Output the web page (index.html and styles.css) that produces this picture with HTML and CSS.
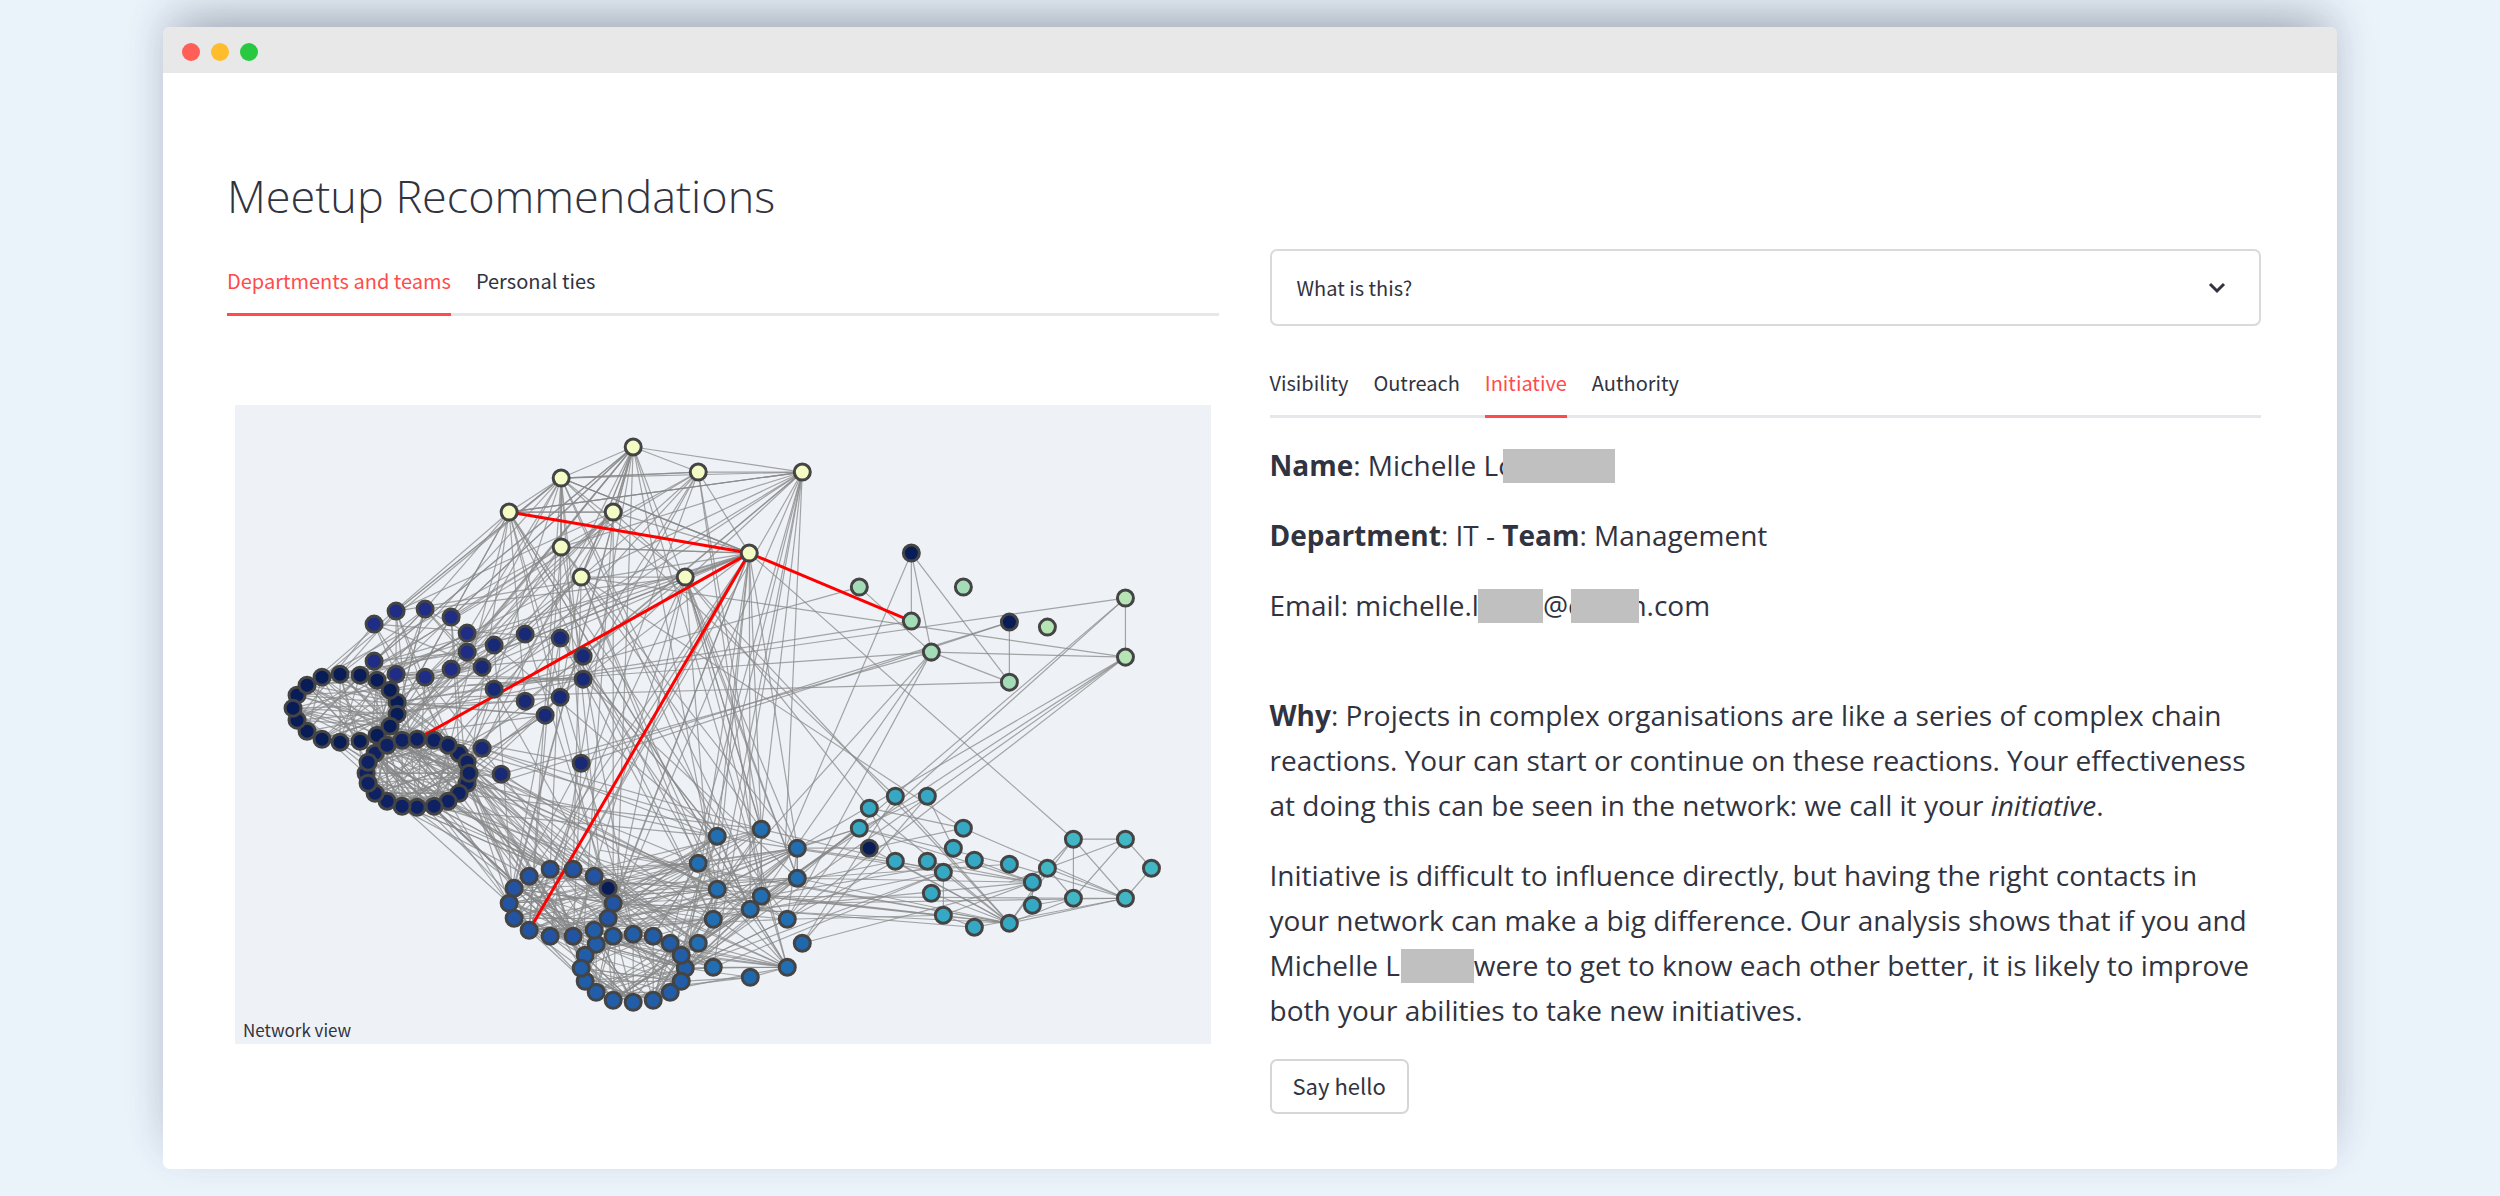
FILE: index.html
```html
<!DOCTYPE html>
<html lang="en">
<head>
<meta charset="utf-8">
<meta name="viewport" content="width=device-width, initial-scale=1">
<title>Meetup Recommendations</title>
<link rel="stylesheet" href="styles.css">
</head>
<body>
<div class="window">
  <div class="titlebar">
    <span class="dot dot-close"></span>
    <span class="dot dot-min"></span>
    <span class="dot dot-max"></span>
  </div>
  <main class="content">
    <h1 class="title">Meetup Recommendations</h1>
    <div class="columns">
      <section class="column">
        <div class="tabs" role="tablist">
          <button class="tab tab-active" role="tab" aria-selected="true">Departments and teams</button>
          <button class="tab" role="tab" aria-selected="false">Personal ties</button>
        </div>
        <figure class="network">
          <svg id="graph" class="graph" viewBox="235 405 975 639" role="img" aria-label="Network view"></svg>
          <figcaption class="network-label">Network view</figcaption>
        </figure>
      </section>
      <section class="column">
        <details class="expander">
          <summary class="expander-head">What is this?
            <svg class="chevron" viewBox="0 0 18 12"><path d="M2 2l7 7 7-7"/></svg>
          </summary>
        </details>
        <div class="tabs tabs-measures" role="tablist">
          <button class="tab" role="tab" aria-selected="false">Visibility</button>
          <button class="tab" role="tab" aria-selected="false">Outreach</button>
          <button class="tab tab-active" role="tab" aria-selected="true">Initiative</button>
          <button class="tab" role="tab" aria-selected="false">Authority</button>
        </div>
        <div class="person">
          <p><strong>Name</strong>: Michelle Lo<span class="redacted redacted-name"></span></p>
          <p><strong>Department</strong>: IT - <strong>Team</strong>: Management</p>
          <p>Email: michelle.l<span class="redacted redacted-user"></span>@c<span class="redacted redacted-host"></span>n.com</p>
        </div>
        <div class="reason">
          <p><strong>Why</strong>: Projects in complex organisations are like a series of complex chain reactions. Your can start or continue on these reactions. Your effectiveness at doing this can be seen in the network: we call it your <em>initiative</em>.</p>
          <p>Initiative is difficult to influence directly, but having the right contacts in your network can make a big difference. Our analysis shows that if you and Michelle L<span class="redacted redacted-surname"></span>were to get to know each other better, it is likely to improve both your abilities to take new initiatives.</p>
        </div>
        <button class="hello">Say hello</button>
      </section>
    </div>
  </main>
</div>
<script src="graph.js"></script>
</body>
</html>
```
FILE: styles.css
```css
* { box-sizing: border-box; }
body {
  margin: 0;
  padding: 27px 163px;
  min-height: 100vh;
  background: #eaf2fa;
  color: #31333f;
  font: 28px/45px "Open Sans", sans-serif;
}
.window {
  border-radius: 7px;
  background: #fff;
  box-shadow: 0 -24px 48px -20px rgba(60, 65, 75, 0.36), 0 -14px 36px rgba(60, 80, 110, 0.14);
}
.titlebar {
  display: flex;
  align-items: center;
  gap: 11px;
  height: 46px;
  padding: 4px 20px 0 19px;
  border-radius: 7px 7px 0 0;
  background: #e8e8e8;
}
.dot { width: 18px; height: 18px; border-radius: 50%; }
.dot-close { background: #ff5f57; }
.dot-min { background: #ffbd2e; }
.dot-max { background: #28c840; }
.content { padding: 96px 76px 55px 64px; }
.title {
  margin: 0 0 26px;
  font-size: 45px;
  font-weight: 300;
  line-height: 54px;
}
.columns {
  display: grid;
  grid-template-columns: 1fr 1fr;
  gap: 51px;
  align-items: start;
}
.tabs {
  display: flex;
  gap: 25px;
  box-shadow: inset 0 -3px #e6e7ea;
}
.tabs-measures { margin-top: 25px; }
.tab, .expander-head, .hello, .network-label {
  color: #31333f;
  font: 20px/24px "Noto Sans CJK SC", sans-serif;
}
.tab {
  padding: 20px 0;
  border: 0;
  border-bottom: 3px solid transparent;
  background: none;
}
.tab-active { border-color: #ff4b4b; color: #ff4b4b; }
.network {
  position: relative;
  margin: 89px 8px 0;
  background: #eef2f7;
}
.graph { display: block; width: 100%; }
.network-label {
  position: absolute;
  left: 8px;
  bottom: 2px;
  font-size: 17px;
}
.edge { stroke: #888; stroke-opacity: 0.75; stroke-width: 1.2; fill: none; }
.edge-strong { stroke: #f00; stroke-width: 3; }
.node { stroke: #444; stroke-width: 3; }
.expander { border: 2px solid #d9dadc; border-radius: 7px; }
.expander-head {
  display: flex;
  align-items: center;
  justify-content: space-between;
  height: 73px;
  padding: 0 33px 0 25px;
}
.chevron { width: 18px; height: 12px; fill: none; stroke: #31333f; stroke-width: 3; }
p { margin: 25px 0 0; }
strong { font-weight: 700; }
.person { margin-bottom: 65px; }
.reason p:first-child { margin-top: 0; }
.redacted {
  position: relative;
  display: inline-block;
  height: 34px;
  background: #c0c0c0;
  vertical-align: -7px;
}
.redacted-name { width: 112px; margin-left: -12px; }
.redacted-user { width: 65px; margin-left: -1px; }
.redacted-host { width: 68px; margin: 0 -10px 0 -10px; }
.redacted-surname { width: 73px; margin-left: 1px; }
.hello {
  display: block;
  margin-top: 26px;
  height: 55px;
  padding: 0 21px 3px;
  border: 2px solid #d6d6d9;
  border-radius: 7px;
  background: #fff;
  font-size: 22px;
}
```
FILE: graph.js
```js
// Node groups: fill colour, then x,y pairs in chart units.
const groups = {
  lead: ['#f4fbc4', [749,553, 633,447, 561,478, 509,512, 698,472, 802,472, 613,512, 561,547, 581,577, 685,577]],
  west: ['#1f2d86', [425,609, 396,611, 374,624, 451,617, 467,633, 467,652, 451,669, 425,677, 396,674, 374,661]],
  inner: ['#182977', [494,645, 494,689, 525,634, 560,638, 583,656, 583,679, 560,697, 525,701, 482,667, 545,715, 482,748, 501,774, 581,763]],
  ringA: ['#081d58', [340,674, 360,675, 377,680, 397,702, 390,690, 397,714, 390,726, 377,735, 360,741, 340,742, 322,739, 307,731, 297,720, 297,695, 293,708, 307,685, 322,677]],
  ringB: ['#0d2163', [375,753, 387,745, 402,740, 417,739, 434,740, 459,753, 448,745, 467,762, 467,783, 469,773, 459,793, 448,801, 434,806, 417,807, 402,806, 387,801, 375,793, 366,773, 368,783, 368,762]],
  ringC: ['#2354a3', [613,903, 529,930, 514,918, 509,903, 514,888, 529,876, 550,869, 573,869, 594,876, 608,918, 573,936, 550,936]],
  ringD: ['#225da8', [685,968, 596,944, 613,936, 633,934, 653,936, 670,943, 681,955, 681,981, 670,992, 653,1000, 633,1002, 613,1000, 596,992, 585,981, 585,955, 581,968, 594,930]],
  mid: ['#216fb2', [797,848, 698,863, 717,836, 761,829, 717,889, 797,878, 761,896, 750,909, 713,919, 787,919, 698,943, 713,967, 787,967]],
  midLow: ['#2068ad', [750,977, 802,943]],
  teal: ['#35a9c3', [859,828, 895,861, 943,872, 931,893, 943,915, 974,927, 1009,923, 1009,864, 1032,905, 1032,882, 974,860, 869,808, 895,796, 927,796, 963,828, 953,848, 927,861]],
  east: ['#41b6c4', [1047,868, 1073,839, 1125,839, 1151,868, 1125,898, 1073,898]],
  green: ['#a4dcb8', [859,587, 963,587, 911,621, 931,652, 1009,682]],
  lime: ['#b6e4b5', [1047,627, 1125,598, 1125,657]],
  hub: ['#081d58', [911,553, 1009,622, 608,888, 869,848]]
};

// Links between groups: [from, to, number of links].
const bundles = [
  ['lead','lead',26], ['lead','west',16], ['lead','inner',14], ['lead','ringA',12], ['lead','ringB',14],
  ['lead','ringC',16], ['lead','ringD',12], ['lead','mid',26], ['west','west',12], ['west','inner',8],
  ['west','ringA',10], ['west','ringB',10], ['inner','ringA',16], ['inner','ringB',10], ['inner','ringC',8],
  ['inner','mid',8], ['ringA','ringA',40], ['ringA','ringB',24], ['ringA','ringC',6], ['ringA','mid',8],
  ['ringB','ringB',75], ['ringB','ringC',20], ['ringB','ringD',12], ['ringB','mid',12], ['ringC','ringC',38],
  ['ringC','ringD',24], ['ringC','mid',44], ['ringD','ringD',70], ['ringD','mid',40], ['mid','mid',16]
];

// Individually placed links: x1,y1,x2,y2.
const links = [
  [911,553,911,621],[911,553,931,652],[911,553,1009,682],[911,553,785,848],[859,587,931,652],[859,587,494,689],
  [1009,622,1009,682],[1009,622,397,814],[1009,622,581,763],[1125,598,1125,657],[1125,598,397,702],[1125,598,869,828],
  [1125,598,797,878],[1125,657,931,652],[1125,657,581,577],[1125,657,797,848],[1125,657,761,896],[1125,657,787,919],
  [1125,657,685,968],[931,652,1009,682],[931,652,467,685],[931,652,501,774],[931,652,761,896],[931,652,717,889],
  [931,652,787,919],[1009,682,451,697],[911,621,397,702],[749,553,1073,839],[685,577,869,808],[581,577,963,828],
  [685,577,1009,923],[561,478,895,796],[1073,839,1125,839],[1125,839,1151,868],[1151,868,1125,898],[1125,898,1073,898],
  [1073,839,1073,898],[1073,839,1125,898],[1073,839,1009,923],[1125,839,1073,898],[1125,839,1009,882],[1047,868,1125,898],
  [1047,868,1073,898],[1047,868,1009,923],[963,828,1125,898],[1009,864,1125,898],[1009,923,1125,898],[974,927,1125,898],
  [1032,882,1032,905],[1032,905,1073,898],[1009,923,1073,898],[1073,839,1032,882],[943,872,943,915],[869,808,963,828],
  [869,808,895,861],[927,796,953,848],[927,796,859,828],[869,808,1009,923],[895,796,1009,923],[895,861,1009,923],
  [859,828,1009,864],[859,828,1032,882],[869,848,1009,923],[869,848,963,828],[943,872,1009,923],[931,893,1009,923],
  [974,860,1032,882],[943,915,974,927],[943,915,1032,882],[927,861,1032,882],[797,878,1032,882],[797,848,859,828],
  [797,848,869,848],[787,919,859,828],[787,919,943,915],[761,896,943,915],[750,909,859,828],[713,919,943,872],
  [713,967,943,872],[717,889,1009,923],[797,878,1009,923],[761,896,1009,923],[750,909,1032,882],[613,903,859,828],
  [613,903,1009,923],[613,918,895,861],[685,968,943,872],[681,955,859,828],[797,848,1032,882],[761,896,974,860],
  [698,943,859,828],[717,836,943,872],[761,829,943,872],[797,878,1009,864],[787,919,895,861],[750,909,974,927],
  [802,943,927,796],[802,943,895,796],[802,943,1032,882],[750,977,681,981],[750,977,681,985],[750,977,685,968],
  [713,967,787,967],[698,943,787,967],[681,955,787,967],[750,977,787,967],[797,848,797,878],[509,903,787,878],
  [1009,923,633,858],[1009,923,600,850],[1073,898,761,896],[1125,898,797,903],
  [633,447,802,472],[633,447,698,472],[698,472,802,472],[561,478,698,472],[561,478,802,472],[509,512,802,472],
  [509,512,613,512],[581,577,802,472],[561,547,802,472],[581,577,685,577],[802,472,785,848],[802,472,761,829],
  [749,553,761,829],[749,553,797,848],[633,447,374,661],[561,478,322,677],[509,512,297,695],[561,478,396,611]
];

const strong = [[749,553,509,512],[749,553,417,739],[749,553,529,930],[749,553,911,621]];

const svg = document.getElementById('graph');
function add(tag, attrs) {
  const el = document.createElementNS('http://www.w3.org/2000/svg', tag);
  for (const key in attrs) el.setAttribute(key, attrs[key]);
  svg.append(el);
}
function line(cls, [x1, y1, x2, y2]) {
  add('path', { class: cls, d: `M${x1} ${y1}L${x2} ${y2}` });
}

// Seeded generator keeps the layout the same on every load.
let seed = 11;
function random() {
  seed = (seed * 1664525 + 1013904223) % 4294967296;
  return seed / 4294967296;
}
// The first nodes of each group are its best-connected ones.
function pick(name, bias) {
  const pts = groups[name][1];
  const i = Math.floor(Math.pow(random(), bias) * pts.length / 2);
  return [pts[2 * i], pts[2 * i + 1]];
}

for (const [from, to, count] of bundles) {
  for (let i = 0; i < count; i++) line('edge', [...pick(from, 1.4), ...pick(to, 1)]);
}
links.forEach(l => line('edge', l));
strong.forEach(l => line('edge-strong', l));
for (const name in groups) {
  const [fill, pts] = groups[name];
  for (let i = 0; i < pts.length; i += 2) add('circle', { class: 'node', cx: pts[i], cy: pts[i + 1], r: 8, fill });
}
```
